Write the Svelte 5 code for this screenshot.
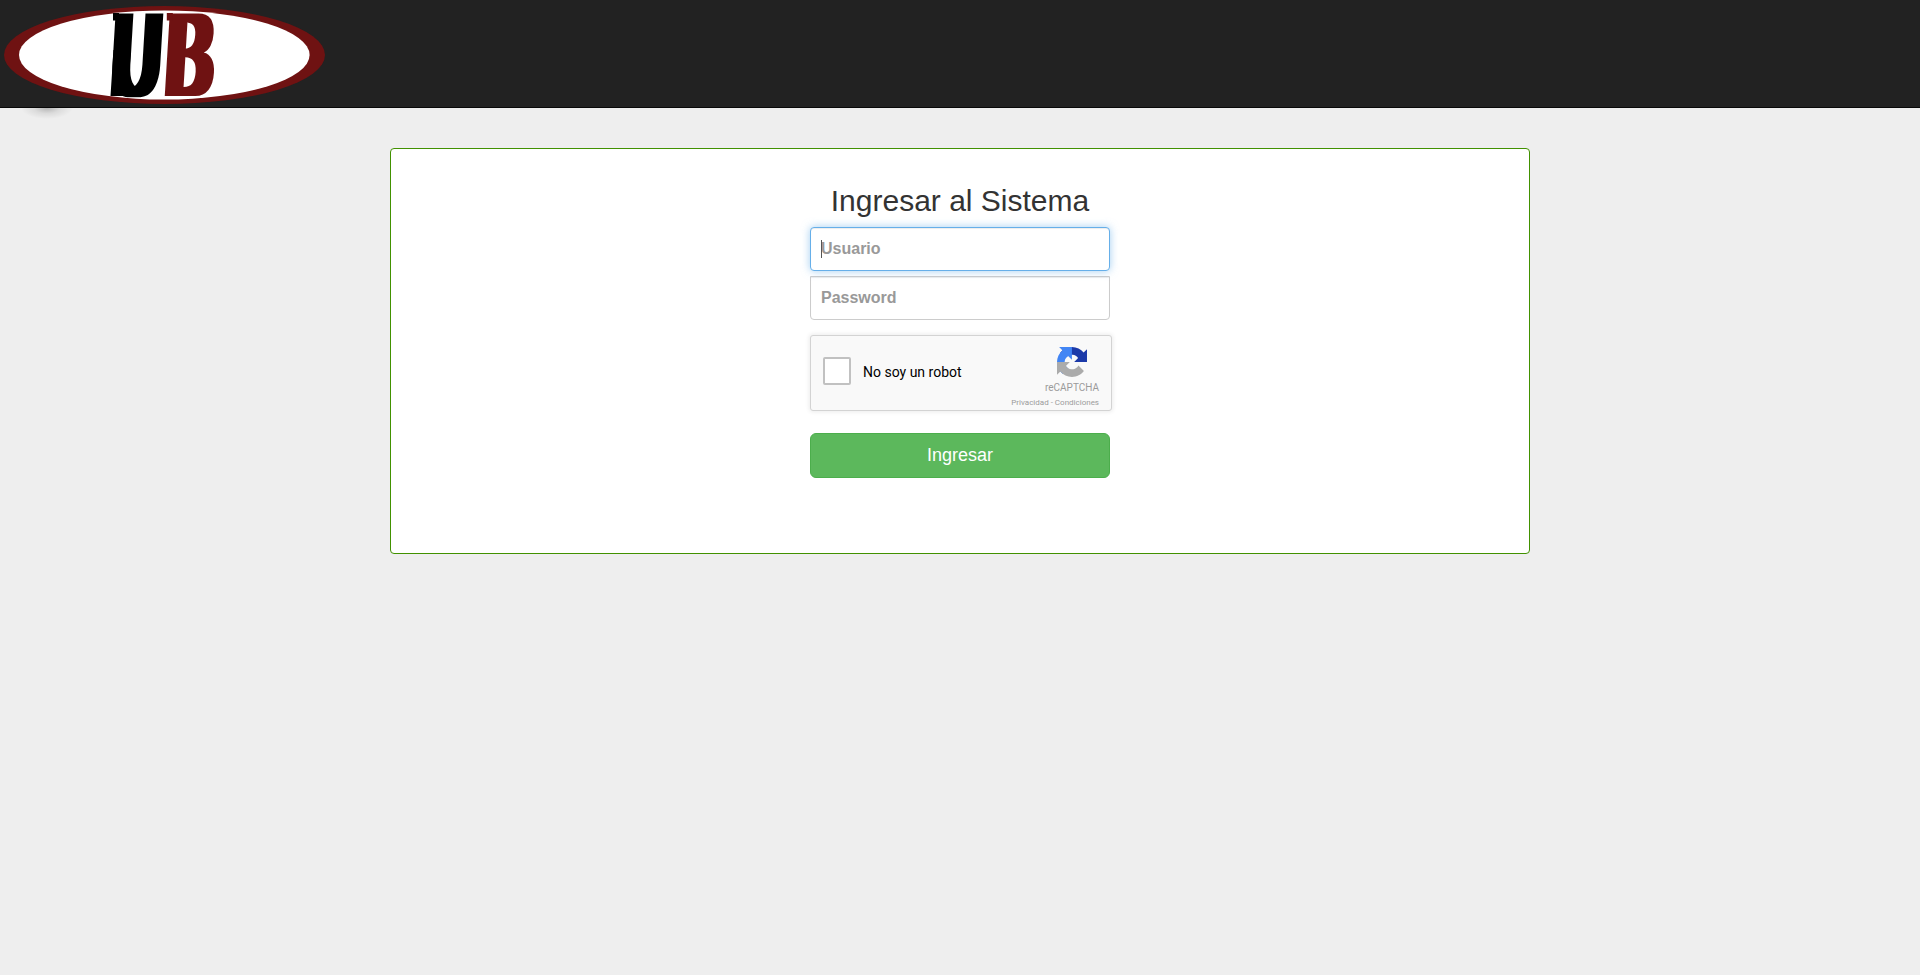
<script>
  let user = $state('');
  let password = $state('');
</script>

<header class="navbar">
  <svg class="brand" width="330" height="107" viewBox="0 0 330 107" role="img" aria-label="UB">
    <defs>
      <filter id="heavy" filterUnits="userSpaceOnUse" x="90" y="0" width="150" height="107" color-interpolation-filters="sRGB">
        <feMorphology operator="dilate" radius="6 0" />
      </filter>
    </defs>
    <ellipse cx="164.5" cy="55" rx="160.5" ry="49" fill="#6f1212" />
    <ellipse cx="164.3" cy="55" rx="145.3" ry="44.5" fill="#fff" />
    <g filter="url(#heavy)" class="letters">
      <text transform="matrix(.525 0 -.06 1 111.7 95.5)" fill="#000">U</text>
      <text transform="matrix(.56 0 -.06 1 165.3 95.5)" fill="#6f1212">B</text>
    </g>
    <rect x="113" y="13" width="6" height="7.5" fill="#000" />
    <path d="M113.5 50H131L128 88.500L137 86V96H110.500Z" fill="#000" />
    <rect x="166.8" y="13" width="6" height="7.5" fill="#6f1212" />
  </svg>
  <span class="shade"></span>
</header>

<main class="panel">
  <form class="login">
    <h2>Ingresar al Sistema</h2>
    <div class="field">
      <input class="user" type="text" placeholder="Usuario" bind:value={user} />
      <span class="caret"></span>
    </div>
    <input class="pass" type="password" placeholder="Password" bind:value={password} />
    <div class="captcha">
      <span class="box"></span>
      <span class="robot">No soy un robot</span>
      <div class="mark">
        <svg width="30" height="30" viewBox="0 0 64 64">
          <path fill="#1c3aa9" d="M64 31.955l-.033-1.37V4.687l-7.16 7.16C50.948 4.674 42.033.093 32.05.093c-10.4 0-19.622 4.96-25.458 12.64l11.736 11.86a15.55 15.55 0 0 1 4.754-5.334c2.05-1.6 4.952-2.906 8.968-2.906.485 0 .86.057 1.135.163 4.976.393 9.288 3.14 11.828 7.124l-8.307 8.307L64 31.953" />
          <path fill="#4285f4" d="M31.862.094l-1.37.033H4.594l7.16 7.16C4.58 13.147 0 22.06 0 32.046c0 10.4 4.96 19.622 12.64 25.458L24.5 45.768a15.55 15.55 0 0 1-5.334-4.754c-1.6-2.05-2.906-4.952-2.906-8.968 0-.485.057-.86.163-1.135.393-4.976 3.14-9.288 7.124-11.828l8.307 8.307L31.86.095" />
          <path fill="#ababab" d="M.001 32.045l.033 1.37v25.898l7.16-7.16c5.86 7.173 14.774 11.754 24.76 11.754 10.4 0 19.622-4.96 25.458-12.64l-11.736-11.86a15.55 15.55 0 0 1-4.754 5.334c-2.05 1.6-4.952 2.906-8.968 2.906-.485 0-.86-.057-1.135-.163-4.976-.393-9.288-3.14-11.828-7.124l8.307-8.307c-10.522.04-22.4.066-27.295-.005" />
        </svg>
        <span class="name">reCAPTCHA</span>
        <span class="terms">Privacidad - Condiciones</span>
      </div>
    </div>
    <button type="button">Ingresar</button>
  </form>
</main>

<style>
  :global(body) {
    background: #eee;
    font-family: "Liberation Sans", Arial, sans-serif;
    color: #333;
  }
  .navbar {
    position: relative;
    box-sizing: border-box;
    height: 108px;
    background: #222;
    border-bottom: 1px solid #080808;
  }
  .brand { display: block; overflow: visible; }
  .letters {
    font-family: "Liberation Sans", Arial, sans-serif;
    font-size: 120px;
  }
  .shade {
    position: absolute;
    left: 20px;
    top: 108px;
    width: 54px;
    height: 13px;
    background: radial-gradient(ellipse 26px 11px at 50% 0, rgba(0, 0, 0, .24), rgba(0, 0, 0, .08) 50%, transparent);
  }
  .panel {
    box-sizing: border-box;
    width: 1140px;
    height: 406px;
    margin: 40px auto 0;
    padding-top: 35px;
    background: #fff;
    border: 1px solid #419100;
    border-radius: 4px;
  }
  .login {
    display: flex;
    flex-direction: column;
    width: 300px;
    margin: 0 auto;
  }
  h2 {
    margin: 0 0 9px;
    font-size: 30px;
    font-weight: 400;
    line-height: 34px;
    text-align: center;
    white-space: nowrap;
  }
  .field { position: relative; display: flex; margin-bottom: 5px; }
  input {
    box-sizing: border-box;
    width: 300px;
    height: 44px;
    margin: 0;
    padding: 0 10px;
    border: 1px solid #ccc;
    border-radius: 4px;
    background: #fff;
    box-shadow: inset 0 1px 1px rgba(0, 0, 0, .075);
    font: bold 16px "Liberation Sans", Arial, sans-serif;
    color: #555;
    outline: none;
  }
  input::placeholder { color: #999; opacity: 1; }
  .user {
    border-color: #66afe9;
    box-shadow: inset 0 1px 1px rgba(0, 0, 0, .075), 0 0 8px rgba(102, 175, 233, .6);
  }
  .pass { border-radius: 0 0 4px 4px; }
  .caret {
    position: absolute;
    left: 11px;
    top: 13px;
    width: 1px;
    height: 18px;
    background: #555;
  }
  .captcha {
    box-sizing: border-box;
    display: flex;
    align-items: flex-start;
    width: 302px;
    height: 76px;
    margin: 15px 0 22px;
    padding-left: 12px;
    background: #f9f9f9;
    border: 1px solid #d3d3d3;
    border-radius: 3px;
    box-shadow: 0 0 4px 1px rgba(0, 0, 0, .08);
    font-family: Roboto, sans-serif;
  }
  .box {
    box-sizing: border-box;
    width: 28px;
    height: 28px;
    margin-top: 21px;
    border: 2px solid #c1c1c1;
    border-radius: 2px;
    background: #fff;
  }
  .robot {
    margin: 28px 0 0 12px;
    font-size: 14px;
    line-height: 17px;
    color: #000;
    white-space: nowrap;
  }
  .mark {
    display: flex;
    flex-direction: column;
    align-items: flex-end;
    margin: 11px 12px 0 auto;
    color: #9b9b9b;
    white-space: nowrap;
  }
  .mark svg { margin-right: 12px; }
  .name { margin-top: 6px; font-size: 10px; line-height: 10px; }
  .terms { margin-top: 5px; font-size: 8px; line-height: 10px; }
  button {
    box-sizing: border-box;
    height: 45px;
    padding: 0 0 1px;
    border: 1px solid #4cae4c;
    border-radius: 6px;
    background: #5cb85c;
    font: 18px "Liberation Sans", Arial, sans-serif;
    color: #fff;
  }
</style>
